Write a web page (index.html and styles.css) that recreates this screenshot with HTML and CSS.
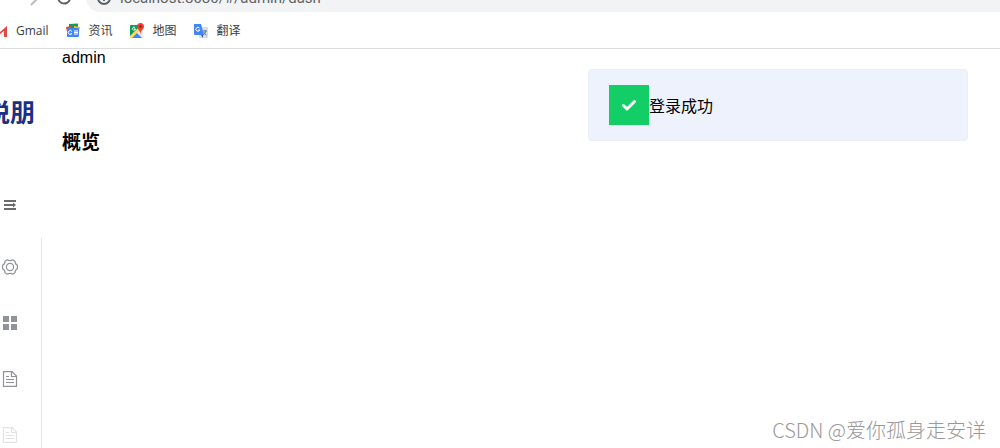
FILE: index.html
```
<!DOCTYPE html>
<html lang="zh-CN">
<head>
    <meta charset="UTF-8">
    <meta name="viewport" content="width=device-width, initial-scale=1.0">
    <title>概览</title>
    <link rel="stylesheet" href="styles.css">
</head>
<body>
    <header class="browser">
        <div class="toolbar">
            <div class="nav-buttons">
                <button type="button" class="nav-button" aria-label="后退">
                    <svg width="16" height="16" viewBox="0 0 16 16" fill="none" stroke="#5f6368" stroke-width="2"><path d="M15 8H2M8 1L1 8l7 7"/></svg>
                </button>
                <button type="button" class="nav-button" aria-label="前进">
                    <svg width="16" height="16" viewBox="0 0 16 16" fill="none" stroke="#babcbe" stroke-width="2"><path d="M1 8h13M8 1l7 7-7 7"/></svg>
                </button>
                <button type="button" class="nav-button" aria-label="刷新">
                    <svg width="16" height="16" viewBox="0 0 16 16" fill="none" stroke="#5f6368" stroke-width="2"><path d="M13 4a6 6 0 1 0 1 5M14 1v5H9"/></svg>
                </button>
            </div>
            <div class="address">
                <svg width="14" height="14" viewBox="0 0 14 14" fill="none" stroke="#5f6368" stroke-width="2"><circle cx="7" cy="7" r="6"/><path d="M7 3v1M7 6v4"/></svg>
                <input type="text" class="address-input" aria-label="地址" value="localhost:8080/#/admin/dash">
            </div>
        </div>
        <nav class="bookmarks">
            <a href="#" class="bookmark">
                <svg width="16" height="16" viewBox="0 0 16 16"><path d="M1 13V4l7 5 7-5v9" fill="#f1f1f1"/><path d="M1 14V3l7 6 7-6v11h-3V8l-4 3-4-3v6z" fill="#e04a3f"/></svg>
                <span>Gmail</span>
            </a>
            <a href="#" class="bookmark">
                <svg width="16" height="16" viewBox="0 0 16 16">
                    <path d="M4 1l9-.5V9H4z" fill="#0f9d58"/>
                    <path d="M1 4l5-1 1 6H2z" fill="#ea4335"/>
                    <path d="M9 3l6 1-1 5H9z" fill="#fbbc04"/>
                    <rect x="2" y="5" width="12" height="9" rx="1" fill="#4285f4"/>
                    <path d="M7 8.500a2 2 0 1 0 0 2H5.500M9 8h4M9 9.500h4M9 11h4" fill="none" stroke="#fff"/>
                </svg>
                <span>资讯</span>
            </a>
            <a href="#" class="bookmark">
                <svg width="16" height="16" viewBox="0 0 16 16">
                    <rect x="1" y="2" width="13" height="13" rx="1" fill="#e8eaed"/>
                    <path d="M1 3q0-1 1-1h9v4L1 15z" fill="#0f9d58"/>
                    <path d="M1 13l9-9 2 2-9 9H1z" fill="#fdd663"/>
                    <path d="M3 15l5-5 5 5z" fill="#4285f4"/>
                    <path d="M6 4.500a1.500 1.500 0 1 0 .5 1.500H5" fill="none" stroke="#fff"/>
                    <path d="M11.500 0a3.500 3.500 0 0 1 3.500 3.500c0 3-3 3-3.500 8-.5-5-3.500-5-3.500-8A3.500 3.500 0 0 1 11.500 0z" fill="#ea4335"/>
                    <circle cx="11.500" cy="3.500" r="1.200" fill="#8c1d18"/>
                </svg>
                <span>地图</span>
            </a>
            <a href="#" class="bookmark">
                <svg width="16" height="16" viewBox="0 0 16 16">
                    <rect x="6" y="4" width="9" height="11" rx="1" fill="#dadce0"/>
                    <path d="M8 12l2 3v-3z" fill="#1a56c4"/>
                    <path d="M1 1h7l3 11H2q-1 0-1-1z" fill="#4285f4"/>
                    <path d="M6.500 5a2 2 0 1 0 .3 2H5" fill="none" stroke="#fff"/>
                    <path d="M10 8h4M12 7v1M13 8q-1 3-3 4M10.500 9q1 2 3 3" fill="none" stroke="#5f7f8c"/>
                </svg>
                <span>翻译</span>
            </a>
        </nav>
    </header>

    <div class="app">
        <aside class="sidebar">
            <div class="logo"><span>悦朋</span></div>
            <button type="button" class="collapse" aria-label="展开菜单">
                <svg width="12" height="10" viewBox="0 0 12 10" fill="#6b6b6b"><path d="M0 0h12v2H0zM0 4h9v2H0zM0 8h12v2H0zM9 2.500l3 2.500-3 2.500z"/></svg>
            </button>
            <nav class="menu">
                <a href="#" class="menu-item" aria-label="设置">
                    <svg width="16" height="16" viewBox="0 0 16 16" fill="none" stroke="#909399" stroke-width="1.200"><path d="M5.300.8Q8 2.600 10.700.8L13 2.200Q12.800 5 15.400 6.300v3.400Q12.800 11 13 13.800L10.700 15.200Q8 13.400 5.300 15.200L3 13.800Q3.200 11 .6 9.700V6.300Q3.200 5 3 2.200z" stroke-linejoin="round"/><circle cx="8" cy="8" r="3.600"/></svg>
                </a>
                <a href="#" class="menu-item" aria-label="概览">
                    <svg width="16" height="16" viewBox="0 0 16 16" fill="#909399"><path d="M1 1h6v6H1zM9 1h6v6H9zM1 9h6v6H1zM9 9h6v6H9z"/></svg>
                </a>
                <a href="#" class="menu-item" aria-label="文档">
                    <svg width="16" height="16" viewBox="0 0 16 16" fill="none" stroke="#909399" stroke-width="1.200"><path d="M1.500.6H10l4.500 4.500v10.300h-13zM9.500.6V5.500h5M4 5.500h3M4 8.500h8M4 11.500h8"/></svg>
                </a>
                <a href="#" class="menu-item disabled" aria-label="文档">
                    <svg width="16" height="16" viewBox="0 0 16 16" fill="none" stroke="#909399" stroke-width="1.200"><path d="M1.500.6H10l4.500 4.500v10.300h-13zM9.500.6V5.500h5M4 5.500h3M4 8.500h8M4 11.500h8"/></svg>
                </a>
            </nav>
        </aside>
        <main class="content">
            <div class="user">admin</div>
            <h3 class="title">概览</h3>
        </main>
    </div>

    <div class="message" role="alert">
        <span class="message-icon">
            <svg width="16" height="16" viewBox="0 0 16 16" fill="none" stroke="#fff" stroke-width="3" stroke-linecap="round" stroke-linejoin="round"><path d="M2.500 8.500L6 12l7.500-7.500"/></svg>
        </span>
        <span>登录成功</span>
    </div>

    <div class="watermark">CSDN @爱你孤身走安详</div>
</body>
</html>
```

FILE: styles.css
```
* {
    box-sizing: border-box;
}
body {
    margin: 0;
    min-height: 100vh;
    display: flex;
    flex-direction: column;
    overflow: hidden;
    background: #fff;
    color: #000;
    font-family: "Liberation Sans", "Noto Sans CJK SC", sans-serif;
    font-size: 16px;
}
button {
    padding: 0;
    border: none;
    background: none;
    cursor: pointer;
}
svg {
    display: block;
    flex: none;
}
.browser {
    border-bottom: 1px solid #dadce0;
    font-family: "Open Sans", "Noto Sans CJK SC", sans-serif;
}
.toolbar {
    display: flex;
    align-items: flex-end;
    height: 12px;
}
.nav-buttons {
    display: flex;
    justify-content: flex-end;
    gap: 17px;
    width: 72px;
    padding-bottom: 6px;
}
.address {
    flex: 1;
    display: flex;
    align-items: center;
    gap: 9px;
    height: 28px;
    margin-left: 14px;
    padding-left: 11px;
    border-radius: 14px 0 0 14px;
    background: #f1f3f4;
}
.address-input {
    flex: 1;
    padding: 0;
    border: none;
    outline: none;
    background: none;
    color: #5f6368;
    font-family: Roboto, sans-serif;
    font-size: 15px;
}
.bookmarks {
    display: flex;
    align-items: center;
    gap: 16px;
    height: 36px;
    margin-left: -8px;
    padding-top: 1px;
}
.bookmark {
    display: flex;
    align-items: center;
    gap: 8px;
    color: #3c4043;
    font-size: 12px;
    line-height: 16px;
    text-decoration: none;
}
.app {
    flex: 1;
    display: flex;
}
.sidebar {
    display: flex;
    flex-direction: column;
    width: 42px;
}
.logo {
    display: flex;
    justify-content: flex-end;
    align-items: center;
    height: 124px;
    padding-right: 7px;
    overflow: hidden;
    color: #1b2f86;
    font-size: 25px;
    font-weight: bold;
}
.logo span {
    flex: none;
}
.collapse {
    display: flex;
    align-items: center;
    height: 64px;
    padding-left: 4px;
}
.menu {
    flex: 1;
    margin-top: 1px;
    border-right: 1px solid #e6e6e6;
}
.menu-item {
    display: flex;
    align-items: center;
    height: 56px;
    padding: 2px 0 0 2px;
}
.disabled {
    opacity: 0.25;
}
.content {
    flex: 1;
    padding-left: 20px;
}
.user {
    height: 60px;
    line-height: 18px;
}
.title {
    margin: 20px 0;
    font-size: 19px;
    line-height: 28px;
}
.message {
    position: absolute;
    top: 69px;
    right: 32px;
    display: flex;
    align-items: center;
    width: 380px;
    padding: 15px 20px;
    border: 1px solid #ebeef5;
    border-radius: 4px;
    background: #edf2fc;
}
.message-icon {
    display: flex;
    align-items: center;
    justify-content: center;
    width: 40px;
    height: 40px;
    background: #13ce66;
}
.watermark {
    position: absolute;
    right: 14px;
    bottom: 4px;
    color: #999;
    font-family: "Noto Sans CJK SC", sans-serif;
    font-size: 20px;
    font-weight: 300;
    line-height: 28px;
}
```
